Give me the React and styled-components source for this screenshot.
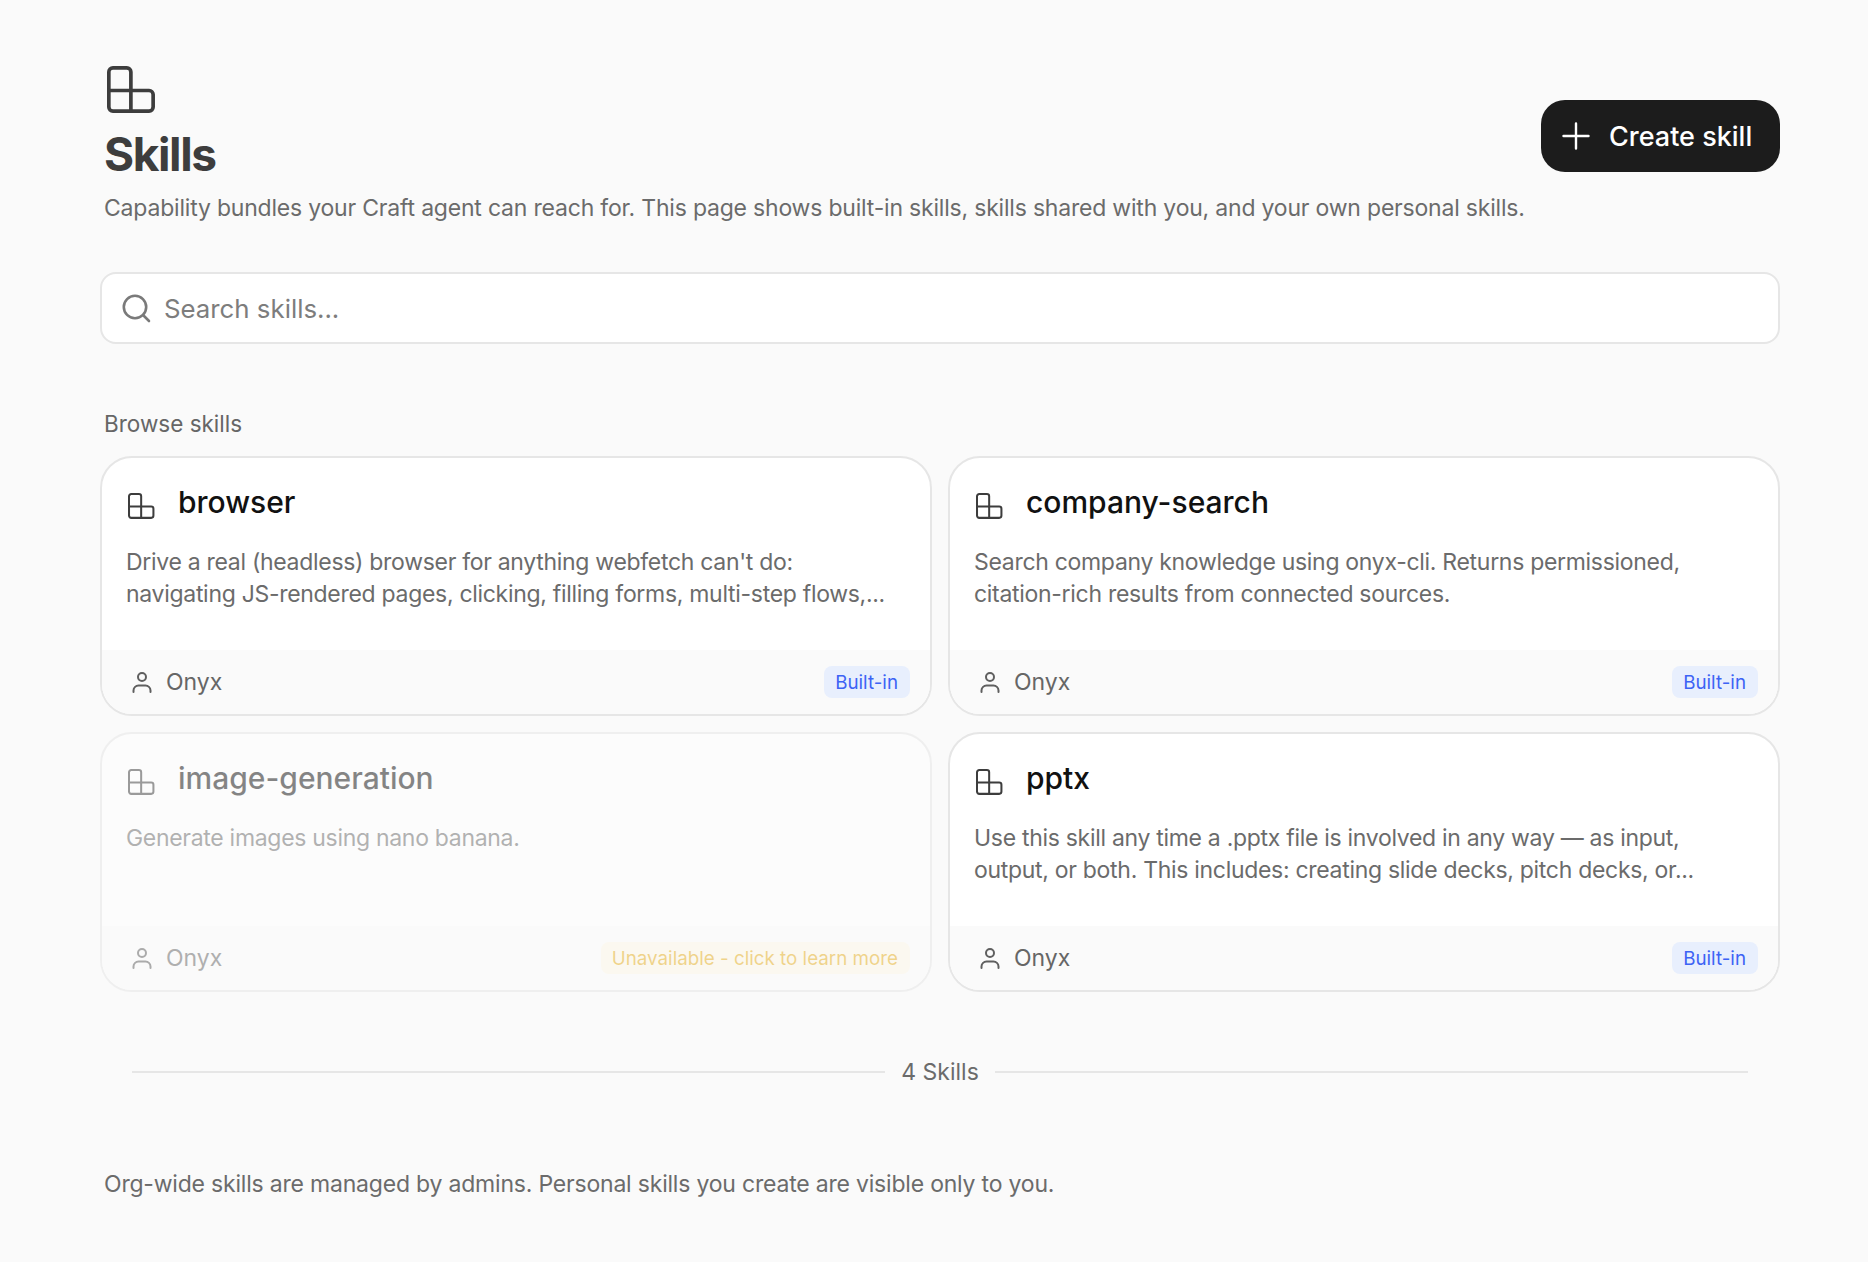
import React from "react";
import styled, { createGlobalStyle } from "styled-components";

const GlobalStyle = createGlobalStyle`
  html, body {
    margin: 0;
    padding: 0;
    background: #fafafa;
    font-family: "Inter", "Liberation Sans", sans-serif;
  }
  * { box-sizing: border-box; }
`;

const skills = [
  {
    name: "browser",
    desc: "Drive a real (headless) browser for anything webfetch can't do: navigating JS-rendered pages, clicking, filling forms, multi-step flows,...",
    badge: "Built-in",
  },
  {
    name: "company-search",
    desc: "Search company knowledge using onyx-cli. Returns permissioned, citation-rich results from connected sources.",
    badge: "Built-in",
  },
  {
    name: "image-generation",
    desc: "Generate images using nano banana.",
    badge: "Unavailable - click to learn more",
    disabled: true,
  },
  {
    name: "pptx",
    desc: "Use this skill any time a .pptx file is involved in any way — as input, output, or both. This includes: creating slide decks, pitch decks, or...",
    badge: "Built-in",
  },
];

const SkillIcon = ({ size, color }) => (
  <svg width={size} height={size} viewBox="0 0 24 24" fill="none" stroke={color} strokeWidth="1.8" strokeLinejoin="round">
    <path d="M2.9 0.9H9.7a2 2 0 0 1 2 2V12H20.6a2 2 0 0 1 2 2V20.1a2 2 0 0 1-2 2H2.9a2 2 0 0 1-2-2V2.9a2 2 0 0 1 2-2Z" />
    <path d="M0.9 12H11.7V22.1" />
  </svg>
);

const UserIcon = () => (
  <svg width="20" height="22" viewBox="0 0 20 22" fill="none" stroke="#5f5f5f" strokeWidth="2" strokeLinecap="round">
    <circle cx="10" cy="6" r="4" />
    <path d="M1.5 21V19.5C1.5 16.5 4 14.5 6.5 14.5H13.5C16 14.5 18.5 16.5 18.5 19.5V21" />
  </svg>
);

const App = () => (
  <>
    <GlobalStyle />
    <Page>
      <Header>
        <HeaderText>
          <HeaderIcon>
            <SkillIcon size={49} color="#3d3d3d" />
          </HeaderIcon>
          <Title>Skills</Title>
          <Subtitle>
            Capability bundles your Craft agent can reach for. This page shows built-in skills, skills shared with you, and your own personal skills.
          </Subtitle>
        </HeaderText>
        <CreateButton>
          <svg width="28" height="28" viewBox="0 0 28 28" fill="none" stroke="#fff" strokeWidth="2.4" strokeLinecap="round">
            <path d="M14 1.5V26.5M1.5 14H26.5" />
          </svg>
          Create skill
        </CreateButton>
      </Header>

      <SearchBox>
        <svg width="30" height="30" viewBox="0 0 30 30" fill="none" stroke="#7a7a7a" strokeWidth="2.6" strokeLinecap="round">
          <circle cx="14" cy="14" r="11.2" />
          <path d="M22.5 22.5L28 28" />
        </svg>
        <SearchPlaceholder>Search skills...</SearchPlaceholder>
      </SearchBox>

      <SectionLabel>Browse skills</SectionLabel>

      <Grid>
        {skills.map((s) => (
          <Card key={s.name} $disabled={s.disabled}>
            <CardBody>
              <CardTitleRow>
                <CardIcon>
                  <SkillIcon size={27} color="#3d3d3d" />
                </CardIcon>
                <CardTitle>{s.name}</CardTitle>
              </CardTitleRow>
              <CardDesc>{s.desc}</CardDesc>
            </CardBody>
            <CardFooter>
              <Owner>
                <UserIcon />
                Onyx
              </Owner>
              <Badge $warn={s.disabled}>{s.badge}</Badge>
            </CardFooter>
          </Card>
        ))}
      </Grid>

      <Count>
        <CountLine />
        <CountText>4 Skills</CountText>
        <CountLine />
      </Count>

      <FootNote>Org-wide skills are managed by admins. Personal skills you create are visible only to you.</FootNote>
    </Page>
  </>
);

export default App;

const Page = styled.div`
  min-height: 1262px;
  padding: 66px 88px 0 100px;
  background: #fafafa;
`;

const Header = styled.div`
  display: flex;
  justify-content: space-between;
  align-items: flex-start;
`;

const HeaderText = styled.div`
  display: flex;
  flex-direction: column;
  padding-left: 4px;
`;

const HeaderIcon = styled.div`
  display: flex;
  height: 54px;
  padding-left: 3px;
`;

const Title = styled.h1`
  margin: 0;
  font-size: 46px;
  line-height: 69px;
  font-weight: 700;
  letter-spacing: -1.4px;
  color: #3d3d3d;
`;

const Subtitle = styled.p`
  margin: 3px 0 0;
  font-size: 23px;
  line-height: 32px;
  color: #6b6b6b;
  letter-spacing: -0.2px;
  white-space: nowrap;
`;

const CreateButton = styled.button`
  display: flex;
  align-items: center;
  gap: 19px;
  height: 72px;
  width: 239px;
  margin-top: 34px;
  padding: 0 21px;
  border: none;
  border-radius: 24px;
  background: #1c1c1c;
  color: #fff;
  font-family: inherit;
  font-size: 27px;
  font-weight: 500;
  white-space: nowrap;
`;

const SearchBox = styled.div`
  display: flex;
  align-items: center;
  gap: 13px;
  height: 72px;
  margin-top: 48px;
  padding: 0 19px;
  border: 2px solid #e6e6e6;
  border-radius: 16px;
  background: #fff;
`;

const SearchPlaceholder = styled.span`
  font-size: 25.8px;
  color: #7d7d7d;
`;

const SectionLabel = styled.div`
  margin-top: 64px;
  padding-left: 4px;
  font-size: 22.5px;
  line-height: 32px;
  color: #666;
`;

const Grid = styled.div`
  display: grid;
  grid-template-columns: 1fr 1fr;
  grid-auto-rows: 260px;
  gap: 16px;
  margin-top: 16px;
`;

const Card = styled.div`
  display: flex;
  flex-direction: column;
  overflow: hidden;
  border: 2px solid #e6e6e6;
  border-radius: 32px;
  background: #fff;
  opacity: ${(p) => (p.$disabled ? 0.5 : 1)};
`;

const CardBody = styled.div`
  flex: 1;
  padding: 28px 24px 0;
`;

const CardTitleRow = styled.div`
  display: flex;
  align-items: center;
  gap: 23px;
  height: 32px;
`;

const CardIcon = styled.div`
  display: flex;
  margin: 8px 0 0 2px;
`;

const CardTitle = styled.div`
  font-size: 30px;
  font-weight: 500;
  color: #111;
`;

const CardDesc = styled.p`
  margin: 28px 0 0;
  font-size: 23px;
  line-height: 32px;
  letter-spacing: -0.3px;
  color: #6b6b6b;
`;

const CardFooter = styled.div`
  display: flex;
  justify-content: space-between;
  align-items: center;
  height: 64px;
  padding: 0 20px 0 30px;
  background: #fafafa;
`;

const Owner = styled.div`
  display: flex;
  align-items: center;
  gap: 14px;
  font-size: 23px;
  color: #666;
`;

const Badge = styled.span`
  display: flex;
  align-items: center;
  height: 32px;
  padding: 0 12px 0 11px;
  border-radius: 8px;
  font-size: 18.8px;
  background: ${(p) => (p.$warn ? "#fdf8e8" : "#e8effd")};
  color: ${(p) => (p.$warn ? "#e6ae1a" : "#3d63f5")};
`;

const Count = styled.div`
  display: flex;
  align-items: center;
  gap: 16px;
  margin-top: 64px;
  padding: 0 32px;
`;

const CountLine = styled.div`
  flex: 1;
  height: 2px;
  background: #e6e6e6;
`;

const CountText = styled.span`
  font-size: 23px;
  line-height: 32px;
  color: #6b6b6b;
`;

const FootNote = styled.p`
  margin: 80px 0 0;
  padding-left: 4px;
  font-size: 23px;
  line-height: 32px;
  letter-spacing: -0.2px;
  color: #6b6b6b;
`;
